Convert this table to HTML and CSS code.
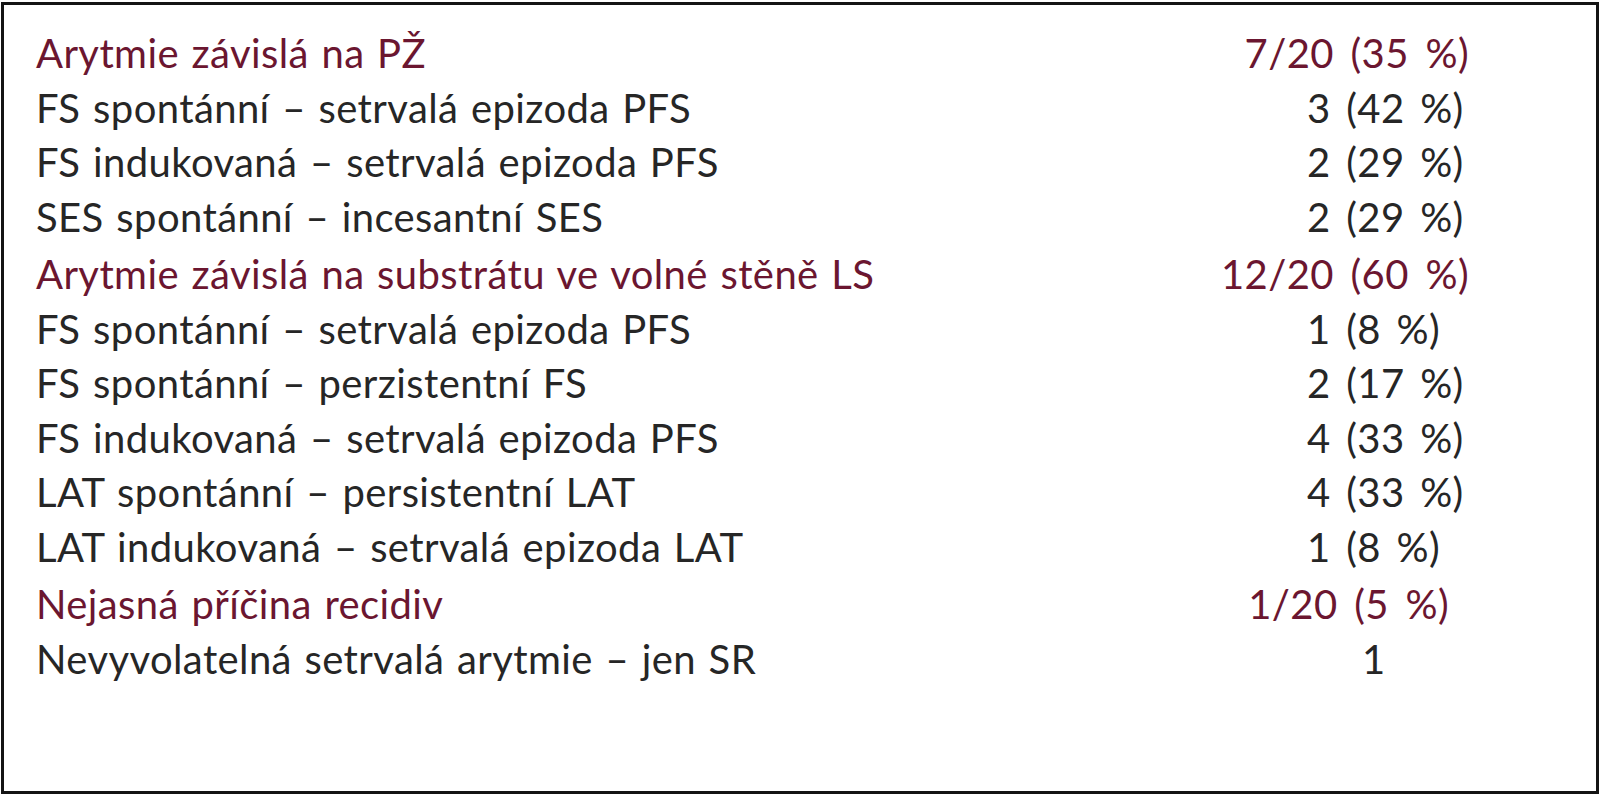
FILE: index.html
```html
<!DOCTYPE html>
<html lang="cs">
<head>
<meta charset="utf-8">
<title>Tabulka</title>
<link rel="stylesheet" href="styles.css">
</head>
<body>
<div class="box">
  <div class="group">
    <div class="row head"><span class="label">Arytmie závislá na PŽ</span><span class="val">7/20 (35 %)</span></div>
    <div class="row"><span class="label">FS spontánní – setrvalá epizoda PFS</span><span class="val">3 (42 %)</span></div>
    <div class="row"><span class="label">FS indukovaná – setrvalá epizoda PFS</span><span class="val">2 (29 %)</span></div>
    <div class="row"><span class="label">SES spontánní – incesantní SES</span><span class="val">2 (29 %)</span></div>
  </div>
  <div class="group">
    <div class="row head"><span class="label">Arytmie závislá na substrátu ve volné stěně LS</span><span class="val">12/20 (60 %)</span></div>
    <div class="row"><span class="label">FS spontánní – setrvalá epizoda PFS</span><span class="val">1 (8 %)</span></div>
    <div class="row"><span class="label">FS spontánní – perzistentní FS</span><span class="val">2 (17 %)</span></div>
    <div class="row"><span class="label">FS indukovaná – setrvalá epizoda PFS</span><span class="val">4 (33 %)</span></div>
    <div class="row"><span class="label">LAT spontánní – persistentní LAT</span><span class="val">4 (33 %)</span></div>
    <div class="row"><span class="label">LAT indukovaná – setrvalá epizoda LAT</span><span class="val">1 (8 %)</span></div>
  </div>
  <div class="group">
    <div class="row head"><span class="label">Nejasná příčina recidiv</span><span class="val val-short">1/20 (5 %)</span></div>
    <div class="row"><span class="label">Nevyvolatelná setrvalá arytmie – jen SR</span><span class="val val-single">1</span></div>
  </div>
</div>
</body>
</html>
```
FILE: styles.css
```css
html, body {
  margin: 0;
  padding: 0;
  background: #fff;
}
body {
  padding: 2px 6px 0 1px;
  font-family: Lato, "Open Sans", sans-serif;
  color: #262626;
}
.box {
  border: 3px solid #141414;
  height: 792px;
  box-sizing: border-box;
  padding: 21px 127px 0 32px;
  display: flex;
  flex-direction: column;
  gap: 3px;
}
.row {
  display: grid;
  grid-template-columns: 1fr 255px;
  font-size: 40px;
  letter-spacing: 0.4px;
  word-spacing: 2px;
  line-height: 54.5px;
  white-space: nowrap;
}
.head {
  color: #6b1630;
}
.val {
  padding-left: 93px;
  word-spacing: 5px;
}
.head .val {
  padding-left: 0;
  text-align: right;
  word-spacing: 6px;
}
.head .val-short {
  padding-right: 20px;
}
.val-single {
  padding-left: 148px;
}
```
